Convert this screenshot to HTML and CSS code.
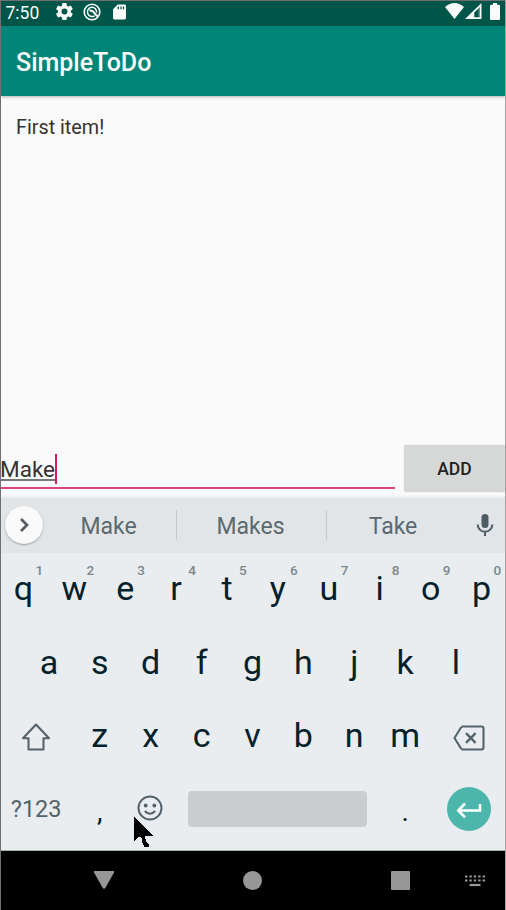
FILE: index.html
```html
<!DOCTYPE html>
<html lang="en">
<head>
<meta charset="utf-8">
<title>SimpleToDo</title>
<link rel="stylesheet" href="styles.css">
</head>
<body>
<div class="phone">
  <header class="status">
    <span class="clock">7:50</span>
    <svg class="gear" viewBox="2 2 20 20"><path fill="#fafafa" d="M19.4 13c0-.3.1-.6.1-1s0-.7-.1-1l2.1-1.600c.2-.2.3-.4.1-.7l-2-3.400c-.1-.2-.4-.3-.6-.2l-2.500 1c-.5-.4-1.100-.7-1.700-1l-.4-2.600c0-.3-.2-.5-.5-.5h-4c-.2 0-.4.200-.5.500l-.4 2.600c-.6.300-1.200.6-1.700 1l-2.500-1c-.2-.1-.5 0-.6.200l-2 3.400c-.1.300 0 .5.100.7L4.500 11c0 .3-.1.600-.1 1s0 .7.100 1l-2.200 1.600c-.1.200-.2.500-.1.700l2 3.400c.1.300.4.300.6.300l2.500-1c.5.400 1.100.700 1.700 1l.4 2.600c.1.200.3.400.5.400h4c.3 0 .5-.2.500-.4l.4-2.600c.6-.3 1.200-.6 1.700-1l2.500 1c.2 0 .5 0 .6-.3l2-3.400c.1-.2.100-.5-.1-.7zM12 15.500a3.500 3.500 0 1 1 0-7 3.500 3.500 0 0 1 0 7z"/></svg>
    <svg class="q" viewBox="0 0 18 18" fill="none" stroke="#fafafa"><circle cx="9" cy="9" r="7.800" stroke-width="1.600"/><path stroke-width="1.500" d="M11.500 12.800A4.600 4.600 0 1 1 13.600 9.500"/><path stroke-width="2.300" d="M6.500 7.700Q9.500 7 11 9.500T15 13.500"/></svg>
    <svg class="sd" viewBox="0 0 14 16"><path fill="#fafafa" fill-rule="evenodd" d="M5 0h7.500Q14 0 14 1.500v13q0 1.500-1.500 1.500h-11Q0 16 0 14.500V5zM5 2v3h1.500V2zM8 2v3h1.300V2zM10.600 2v3H12V2z"/></svg>
    <svg class="wifi" viewBox="0 0 19 16"><path fill="#fafafa" d="M0 4Q9.500-4 19 4L9.500 16z"/></svg>
    <svg class="cell" viewBox="0 0 17 16"><path fill="#fafafa" fill-rule="evenodd" d="M16.500 0v16H0zM15 4L9.300 9.500V14.300H15z"/><path fill="#fafafa" d="M13.500 5.500L15 4V14.300H13.500z" opacity=".4"/></svg>
    <svg class="battery" viewBox="0 0 10 17"><path fill="#fafafa" d="M3 0h4v1.700h1.700Q10 1.700 10 3v12.700Q10 17 8.700 17H1.300Q0 17 0 15.700V3q0-1.300 1.300-1.300H3z"/></svg>
  </header>
  <div class="appbar">SimpleToDo</div>
  <main class="list"><div class="item">First item!</div></main>
  <div class="compose">
    <div class="field"><span class="typed">Make</span><span class="caret"></span></div>
    <button class="add">ADD</button>
  </div>
  <div class="suggest">
    <span class="expand"><svg viewBox="0 0 38 38"><path d="M16 13l6 6-6 6" fill="none" stroke="#555b5f" stroke-width="2.700"/></svg></span>
    <span class="word">Make</span>
    <span class="word mid">Makes</span>
    <span class="word last">Take</span>
    <svg class="mic" viewBox="0 0 18 24"><rect x="5.500" y="1" width="7" height="14" rx="3.500" fill="#4c5c64"/><path d="M1.700 11.500a7.300 7.300 0 0 0 14.600 0M9 18.500V23" fill="none" stroke="#4c5c64" stroke-width="2"/></svg>
  </div>
  <div class="keys">
    <div class="row">
      <span class="key">q<sup>1</sup></span><span class="key">w<sup>2</sup></span><span class="key">e<sup>3</sup></span><span class="key">r<sup>4</sup></span><span class="key">t<sup>5</sup></span><span class="key">y<sup>6</sup></span><span class="key">u<sup>7</sup></span><span class="key">i<sup>8</sup></span><span class="key">o<sup>9</sup></span><span class="key">p<sup>0</sup></span>
    </div>
    <div class="row inset">
      <span class="key">a</span><span class="key">s</span><span class="key">d</span><span class="key">f</span><span class="key">g</span><span class="key">h</span><span class="key">j</span><span class="key">k</span><span class="key">l</span>
    </div>
    <div class="row">
      <span class="key wide"><svg class="shift" viewBox="0 0 30 30"><path d="M15 2.500L28 16.200H22.500V27.500H7.500V16.200H2z" fill="none" stroke="#54636a" stroke-width="2.100" stroke-linejoin="round"/></svg></span><span class="key">z</span><span class="key">x</span><span class="key">c</span><span class="key">v</span><span class="key">b</span><span class="key">n</span><span class="key">m</span><span class="key wide"><svg class="back" viewBox="0 0 32 26"><path d="M9.500 1.500H28.500Q30.500 1.500 30.500 3.500V22.500Q30.500 24.500 28.500 24.500H9.500L8 23.500 1.500 13 8 2.500z" fill="none" stroke="#54636a" stroke-width="2.100" stroke-linejoin="round"/><path d="M13 8.200l9.600 9.600M22.600 8.200L13 17.800" stroke="#54636a" stroke-width="2.400"/></svg></span>
    </div>
    <div class="row">
      <span class="key wide sym">?123</span><span class="key punct">,</span><span class="key"><svg class="smile" viewBox="0 0 26 26"><circle cx="13" cy="13" r="11.500" fill="none" stroke="#54636a" stroke-width="2"/><circle cx="8.700" cy="10.500" r="1.900" fill="#54636a"/><circle cx="17.300" cy="10.500" r="1.900" fill="#54636a"/><path d="M7.800 16q5.200 5.600 10.400 0" fill="none" stroke="#54636a" stroke-width="2"/></svg></span><span class="key spacer"><span class="space"></span></span><span class="key punct">.</span><span class="key wide"><span class="enter"><svg viewBox="0 0 44 44"><path d="M33 17v6.500H12M18 16.500L11.300 23.500 18 30.300" fill="none" stroke="#fff" stroke-width="2.600"/></svg></span></span>
    </div>
    <svg class="pointer" viewBox="0 0 20 31" shape-rendering="crispEdges"><path d="M0 0L19 18.500H10.500V21L12 22V25L14.500 27V29.500H10.500L8 25V22L6 19.500 4 20 0 24z"/></svg>
  </div>
  <nav class="nav">
    <svg class="n-back" viewBox="0 0 20 18"><path d="M0 0h20v1.500L11 17.500H9L0 1.500z" fill="#979797"/></svg>
    <span class="n-home"></span>
    <span class="n-recent"></span>
    <svg class="n-kbd" viewBox="0 0 20 12"><path d="M0 1.400h20M0 5.400h20" stroke="#979797" stroke-width="2" stroke-dasharray="2.400 2"/><path d="M4.500 10h11" stroke="#979797" stroke-width="2.200"/></svg>
  </nav>
</div>
</body>
</html>
```
FILE: styles.css
```css
* { box-sizing: border-box; }
body { margin: 0; font-family: Roboto, sans-serif; }
svg { display: block; flex: none; }
.phone {
  width: 506px; height: 910px; overflow: hidden;
  display: flex; flex-direction: column;
  border: 1px solid #707070; border-right-color: #a3a3a3; border-bottom: 0;
  background: #fafafa;
}
.status { flex: none; height: 25px; background: #005549; display: flex; align-items: flex-start; color: #fafafa; }
.clock { width: 55px; padding-left: 4.500px; font-size: 17.500px; line-height: 24px; }
.gear { width: 17px; height: 17px; margin: 2px 0 0 0; }
.q { width: 18px; height: 18px; margin: 2px 0 0 10px; }
.sd { width: 13px; height: 16px; margin: 3px 0 0 12px; }
.wifi { width: 19px; height: 16px; margin: 2px 0 0 auto; }
.cell { width: 17px; height: 16px; margin: 2px 0 0 1px; }
.battery { width: 10px; height: 17px; margin: 2px 5px 0 8px; }
.appbar {
  flex: none; height: 70px; padding-left: 15px; background: #008577; color: #fafafa;
  font-size: 25px; font-weight: 500; line-height: 74px; z-index: 1;
  box-shadow: 0 1px 3px rgba(0,0,0,.3);
}
.list { flex: none; height: 346px; padding: 19px 15px; }
.item { font-size: 19.800px; line-height: 26px; color: #333; }
.compose { flex: none; height: 55px; display: flex; justify-content: space-between; }
.field { width: 394px; height: 47px; border-bottom: 2px solid #e0447a; display: flex; align-items: flex-start; padding-top: 12px; }
.typed { margin-left: -1px; font-size: 22.500px; line-height: 31px; color: #333; height: 27px; border-bottom: 2px solid #777; }
.caret { width: 2px; height: 30px; background: #d81b60; }
.add { width: 101px; height: 47px; margin-top: 3px; border: 0; border-radius: 3px; background: #d6d7d7; box-shadow: 0 0 1px #aaa; font: 500 17.500px/48px Roboto, sans-serif; color: #222; padding: 0; }
.suggest { flex: none; height: 56px; background: #e1e5e8; display: flex; align-items: center; color: #5c696f; box-shadow: 0 -1px 2px rgba(0,0,0,.05); border-top: 1px solid #e9ebed; }
.expand { width: 38px; height: 38px; margin-left: 4px; margin-top: -2px; border-radius: 50%; background: #fafafa; box-shadow: 0 1px 2px rgba(0,0,0,.3); }
.word { width: 134px; font-size: 23px; line-height: 33px; height: 30px; margin-top: -1px; padding-right: 2px; text-align: center; border-right: 1px solid #c3c8cb; }
.mid { width: 150px; }
.last { border: 0; }
.mic { width: 18px; height: 24px; margin-left: 15px; margin-top: -2px; }
.keys { flex: none; height: 298px; position: relative; background: #e9edf0; border-bottom: 1px solid #a9b0b2; margin-right: -1px; border-right: 1px solid #a3a3a3; }
.row { display: flex; height: 73.500px; width: 509px; margin-left: -3px; }
.row:first-child { margin-top: -1px; }
.inset { padding: 0 25.450px; }
.key { flex: none; width: 50.900px; display: flex; align-items: center; justify-content: center; position: relative; font-size: 34px; line-height: 73px; color: #03212b; }
.key sup { position: absolute; left: 37.500px; top: 10px; font-size: 13.500px; line-height: 16px; font-weight: 500; color: #7b878b; }
.wide { width: 76.350px; }
.shift { width: 30px; height: 30px; margin-top: 3px; }
.back { width: 32px; height: 26px; margin-top: 5px; }
.sym { font-size: 23.500px; color: #54636a; }
.punct { font-size: 28px; padding-top: 5px; }
.smile { width: 26px; height: 26px; margin: -2px 1px 0 0; }
.spacer { width: 203.600px; }
.space { width: 179px; height: 36px; border-radius: 4px; background: #c9cdd0; }
.enter { width: 44px; height: 44px; border-radius: 50%; background: #4db6ac; }
.pointer { position: absolute; left: 133px; top: 264px; width: 20px; height: 31px; }
.nav { flex: none; height: 59px; background: #000; display: flex; align-items: center; }
.n-back { width: 20px; height: 18px; margin-left: 93px; margin-top: -2px; }
.n-home { width: 19px; height: 19px; margin-left: 129px; border-radius: 50%; background: #979797; }
.n-recent { width: 19px; height: 19px; margin-left: 129px; border-radius: 1px; background: #979797; }
.n-kbd { width: 20px; height: 12px; margin-left: 55px; }
```
